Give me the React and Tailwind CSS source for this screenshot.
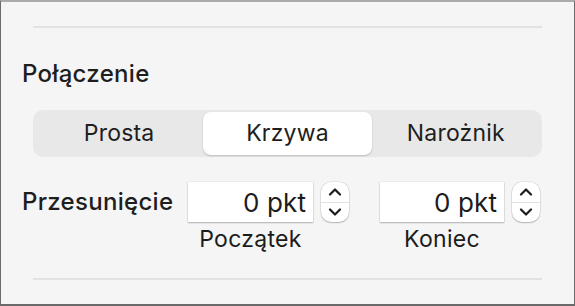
import React from "react";

function Stepper() {
  return (
    <div className="flex h-[40px] w-[28px] flex-col items-center rounded-[10px] bg-white shadow-[0_0_0_0.5px_rgba(0,0,0,0.12),0_1px_1.5px_rgba(0,0,0,0.22)]">
      <div className="flex flex-1 items-center justify-center">
        <svg width="14" height="9" viewBox="0 0 14 9" fill="none">
          <path d="M2 7.5 L7 2.5 L12 7.5" stroke="#1c1c1c" strokeWidth="2.2" strokeLinecap="round" strokeLinejoin="round" />
        </svg>
      </div>
      <div className="h-px w-full bg-[#e2e2e2]" />
      <div className="flex flex-1 items-center justify-center">
        <svg width="14" height="9" viewBox="0 0 14 9" fill="none">
          <path d="M2 1.5 L7 6.5 L12 1.5" stroke="#1c1c1c" strokeWidth="2.2" strokeLinecap="round" strokeLinejoin="round" />
        </svg>
      </div>
    </div>
  );
}

function Field({ width, caption }) {
  return (
    <div className="flex flex-col items-center" style={{ width }}>
      <div className="flex h-[40px] w-full items-center justify-end bg-white pr-[7px] text-[26px] tracking-[0.1px] text-[#1c1c1c] shadow-[0_0_0_0.5px_rgba(0,0,0,0.08),0_1px_1.5px_rgba(0,0,0,0.25)]">
        0 pkt
      </div>
      <div className="mt-[4px] text-[23px] leading-[26px] tracking-[0.3px] text-[#1c1c1c]">{caption}</div>
    </div>
  );
}

export default function App() {
  return (
    <div
      className="box-border flex h-[306px] w-[575px] flex-col border-t-2 border-b-2 border-l border-r border-t-[#ababab] border-b-[#6a6a6a] border-l-[#6a6a6a] border-r-[#6a6a6a] bg-[#f5f5f5]"
      style={{ fontFamily: "Inter, 'Noto Sans', sans-serif" }}
    >
      <div className="mx-[32px] mt-[24px] h-[2px] bg-[#e2e2e2]" />
      <div className="ml-[21px] mt-[32px] text-[24px] font-medium leading-[28px] tracking-[0.3px] text-[#1e1e1e]">
        Połączenie
      </div>
      <div className="mx-[32px] mt-[22px] flex h-[47px] rounded-[10px] bg-[#e8e8e8] p-[2px] text-[23px] tracking-[0.2px] text-[#1e1e1e]">
        <div className="flex flex-1 items-center justify-center">Prosta</div>
        <div className="flex flex-1 items-center justify-center rounded-[8px] bg-white shadow-[0_1px_2px_rgba(0,0,0,0.2)]">
          Krzywa
        </div>
        <div className="flex flex-1 items-center justify-center">Narożnik</div>
      </div>
      <div className="mt-[25px] flex items-start">
        <div className="ml-[21px] flex h-[40px] w-[166px] items-center text-[24px] font-medium tracking-[0.3px] text-[#1e1e1e]">
          Przesunięcie
        </div>
        <Field width={125} caption="Początek" />
        <div className="ml-[8px]">
          <Stepper />
        </div>
        <div className="ml-[31px]">
          <Field width={124} caption="Koniec" />
        </div>
        <div className="ml-[8px]">
          <Stepper />
        </div>
      </div>
      <div className="mx-[32px] mt-auto mb-[24px] h-[2px] bg-[#e2e2e2]" />
    </div>
  );
}
